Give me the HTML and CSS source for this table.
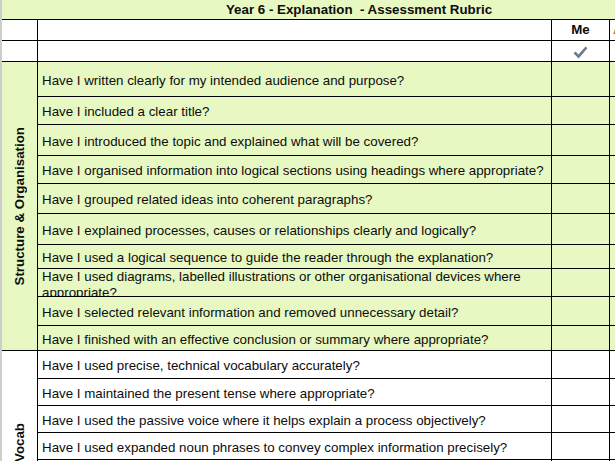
FILE: index.html
```html
<!DOCTYPE html>
<html>
<head>
<meta charset="utf-8">
<link rel="stylesheet" href="styles.css">
</head>
<body>
<div class="viewport">
<div class="sheet">
  <div class="title">Year 6 - Explanation  - Assessment Rubric</div>
  <div class="row white h21">
    <div class="c lab"></div><div class="c q"></div><div class="c me bold">Me</div><div class="c x adult">Adult</div><div class="c x"></div>
  </div>
  <div class="row white h21">
    <div class="c lab"></div><div class="c q"></div>
    <div class="c me"><svg class="tick" width="15" height="13" viewBox="0 0 15 13"><path d="M0.5 7.2 L2.6 5.4 L5.4 8.6 L12.6 0.6 L14.4 2.2 L5.6 12.4 Z" fill="#6b7c8c"/></svg></div>
    <div class="c x"></div><div class="c x"></div>
  </div>
  <div class="section green">
    <div class="label"><span>Structure &amp; Organisation</span></div>
    <div class="rows">
      <div class="row h35"><div class="c q">Have I written clearly for my intended audience and purpose?</div><div class="c me"></div><div class="c x"></div><div class="c x"></div></div>
      <div class="row h28"><div class="c q">Have I included a clear title?</div><div class="c me"></div><div class="c x"></div><div class="c x"></div></div>
      <div class="row h31"><div class="c q">Have I introduced the topic and explained what will be covered?</div><div class="c me"></div><div class="c x"></div><div class="c x"></div></div>
      <div class="row h28"><div class="c q">Have I organised information into logical sections using headings where appropriate?</div><div class="c me"></div><div class="c x"></div><div class="c x"></div></div>
      <div class="row h30"><div class="c q">Have I grouped related ideas into coherent paragraphs?</div><div class="c me"></div><div class="c x"></div><div class="c x"></div></div>
      <div class="row h31"><div class="c q">Have I explained processes, causes or relationships clearly and logically?</div><div class="c me"></div><div class="c x"></div><div class="c x"></div></div>
      <div class="row h24"><div class="c q">Have I used a logical sequence to guide the reader through the explanation?</div><div class="c me"></div><div class="c x"></div><div class="c x"></div></div>
      <div class="row h28"><div class="c q top">Have I used diagrams, labelled illustrations or other organisational devices where appropriate?</div><div class="c me"></div><div class="c x"></div><div class="c x"></div></div>
      <div class="row h29"><div class="c q">Have I selected relevant information and removed unnecessary detail?</div><div class="c me"></div><div class="c x"></div><div class="c x"></div></div>
      <div class="row h25"><div class="c q">Have I finished with an effective conclusion or summary where appropriate?</div><div class="c me"></div><div class="c x"></div><div class="c x"></div></div>
    </div>
  </div>
  <div class="section white">
    <div class="label"><span>Vocab</span></div>
    <div class="rows">
      <div class="row h28"><div class="c q">Have I used precise, technical vocabulary accurately?</div><div class="c me"></div><div class="c x"></div><div class="c x"></div></div>
      <div class="row h27"><div class="c q">Have I maintained the present tense where appropriate?</div><div class="c me"></div><div class="c x"></div><div class="c x"></div></div>
      <div class="row h27"><div class="c q">Have I used the passive voice where it helps explain a process objectively?</div><div class="c me"></div><div class="c x"></div><div class="c x"></div></div>
      <div class="row h27"><div class="c q">Have I used expanded noun phrases to convey complex information precisely?</div><div class="c me"></div><div class="c x"></div><div class="c x"></div></div>
      <div class="row h25"><div class="c q">Have I used causal conjunctions and adverbials to link cause and effect?</div><div class="c me"></div><div class="c x"></div><div class="c x"></div></div>
      <div class="row h25"><div class="c q">Have I defined any specialist terms for the reader?</div><div class="c me"></div><div class="c x"></div><div class="c x"></div></div>
      <div class="row h25"><div class="c q">Have I avoided informal or chatty language?</div><div class="c me"></div><div class="c x"></div><div class="c x"></div></div>
    </div>
  </div>
</div>
</div>
</body>
</html>
```

FILE: styles.css
```css
html, body {
  margin: 0;
  padding: 0;
  overflow: hidden;
  background: #ffffff;
}
.viewport {
  width: 615px;
  height: 461px;
  overflow: hidden;
}
.sheet {
  width: 714px;
  border-left: 2px solid #cdcdcd;
  font-family: "Liberation Sans", Arial, sans-serif;
  font-size: 10pt;
  color: #0d0d0d;
}
.title {
  box-sizing: border-box;
  height: 20px;
  background: #e7f8c2;
  border-bottom: 1px solid #000;
  text-align: center;
  font-weight: bold;
  white-space: pre;
  line-height: 19px;
}
.row {
  display: flex;
  box-sizing: border-box;
  border-bottom: 1px solid #000;
}
.white { background: #fff; }
.green { background: #e7f8c2; }
.h21 { height: 21px; }
.h24 { height: 24px; }
.h25 { height: 25px; }
.h27 { height: 27px; }
.h28 { height: 28px; }
.h29 { height: 29px; }
.h30 { height: 30px; }
.h31 { height: 31px; }
.h35 { height: 35px; }
.c {
  box-sizing: border-box;
  border-right: 1px solid #000;
  display: flex;
  align-items: center;
  overflow: hidden;
  line-height: 16px;
}
.lab { width: 36px; }
.q { width: 514px; padding: 3px 4px 0 4px; }
.q.top { align-items: flex-start; padding-top: 0; }
.me { width: 58px; justify-content: center; }
.x { width: 52px; }
.bold { font-weight: bold; }
.adult {
  color: #e26b0a;
  font-weight: bold;
  padding-left: 3px;
}
.tick { display: block; margin-top: 2px; }
.section {
  display: flex;
}
.label {
  box-sizing: border-box;
  width: 36px;
  border-right: 1px solid #000;
  border-bottom: 1px solid #000;
  display: flex;
  align-items: center;
  justify-content: center;
}
.label span {
  writing-mode: vertical-rl;
  transform: rotate(180deg);
  font-weight: bold;
  white-space: nowrap;
}
.rows {
  display: flex;
  flex-direction: column;
}
```
